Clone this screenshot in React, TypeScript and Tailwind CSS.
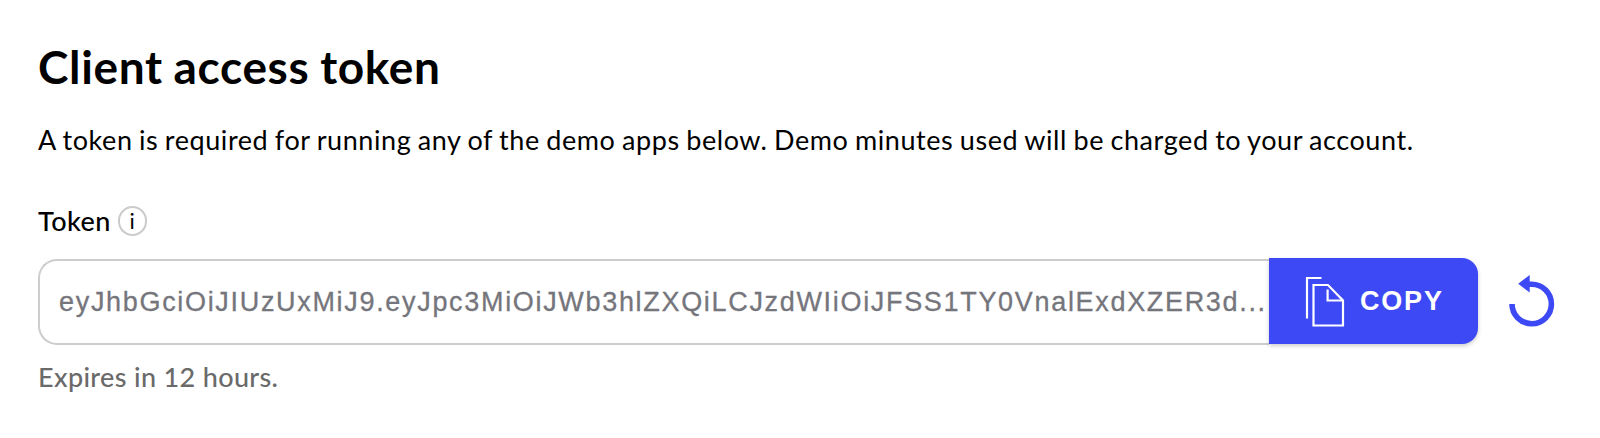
const TOKEN = 'eyJhbGciOiJIUzUxMiJ9.eyJpc3MiOiJWb3hlZXQiLCJzdWIiOiJFSS1TY0VnalExdXZER3d...';

function CopyIcon() {
  return (
    <svg className="h-[52px] w-[40px] shrink-0" viewBox="0 0 40 52" fill="none" stroke="#fff" strokeWidth="2.2">
      <path d="M2 43.5V3H16.5" />
      <path d="M8.5 10H23L38 25.5V50.5H8.5Z" />
      <path d="M22.6 14.5V25.5H38" />
    </svg>
  );
}

function ResetIcon() {
  return (
    <svg className="h-[52px] w-[46px] shrink-0" viewBox="0 0 46 52" fill="none">
      <path d="M3 29A19.7 19.7 0 1 0 22.7 9.3H19" stroke="#3c49f4" strokeWidth="5.6" />
      <path d="M9.2 8.8L20.7 0V17.6Z" fill="#3c49f4" />
    </svg>
  );
}

export default function App() {
  return (
    <main className="h-[438px] w-[1600px] overflow-hidden bg-white pl-[38px] pt-[39px] font-['Lato',sans-serif] text-black">
      <h1 className="h-[56px] whitespace-nowrap text-[46px] font-bold leading-[56px] tracking-[0.65px] [word-spacing:-1px]">
        Client access token
      </h1>
      <p className="mt-[27px] h-[36px] whitespace-nowrap text-[27px] leading-[36px] tracking-[0.58px] [word-spacing:-1px]">
        A token is required for running any of the demo apps below. Demo minutes used will be charged to your account.
      </p>
      <div className="mt-[45px] flex h-[36px] items-center">
        <label className="text-[27px] font-medium leading-[36px] tracking-[0.4px]">Token</label>
        <span className="ml-[7px] flex h-[30px] w-[29px] items-center justify-center rounded-full border-2 border-[#cbcbcb] text-[22px] leading-[26px]">i</span>
      </div>
      <div className="mt-[19px] flex h-[87px] items-start">
        <div className="mt-[1px] flex h-[86px] w-[1231px] shrink-0 items-center overflow-hidden whitespace-nowrap rounded-l-[19px] border-2 border-r-0 border-[#cdcdcd] pl-[19px] font-['Liberation_Sans',sans-serif] text-[27px] tracking-[1.68px] text-[#75757c] [-webkit-text-stroke:0.3px_#75757c]">
          <span>{TOKEN}</span>
        </div>
        <button className="flex h-[86px] w-[209px] shrink-0 items-center rounded-r-[16px] bg-[#3c49f4] pl-[36px] font-['Liberation_Sans',sans-serif] text-[27px] font-bold tracking-[1.8px] text-white shadow-[0_2px_4px_rgba(0,0,0,0.2)]">
          <CopyIcon />
          <span className="ml-[15px]">COPY</span>
        </button>
        <button className="ml-[31px] mt-[17px]" aria-label="Refresh token">
          <ResetIcon />
        </button>
      </div>
      <p className="mt-[14px] h-[36px] whitespace-nowrap text-[27px] font-medium leading-[36px] tracking-[0.35px] text-[#6a6a6a]">Expires in 12 hours.</p>
    </main>
  );
}
